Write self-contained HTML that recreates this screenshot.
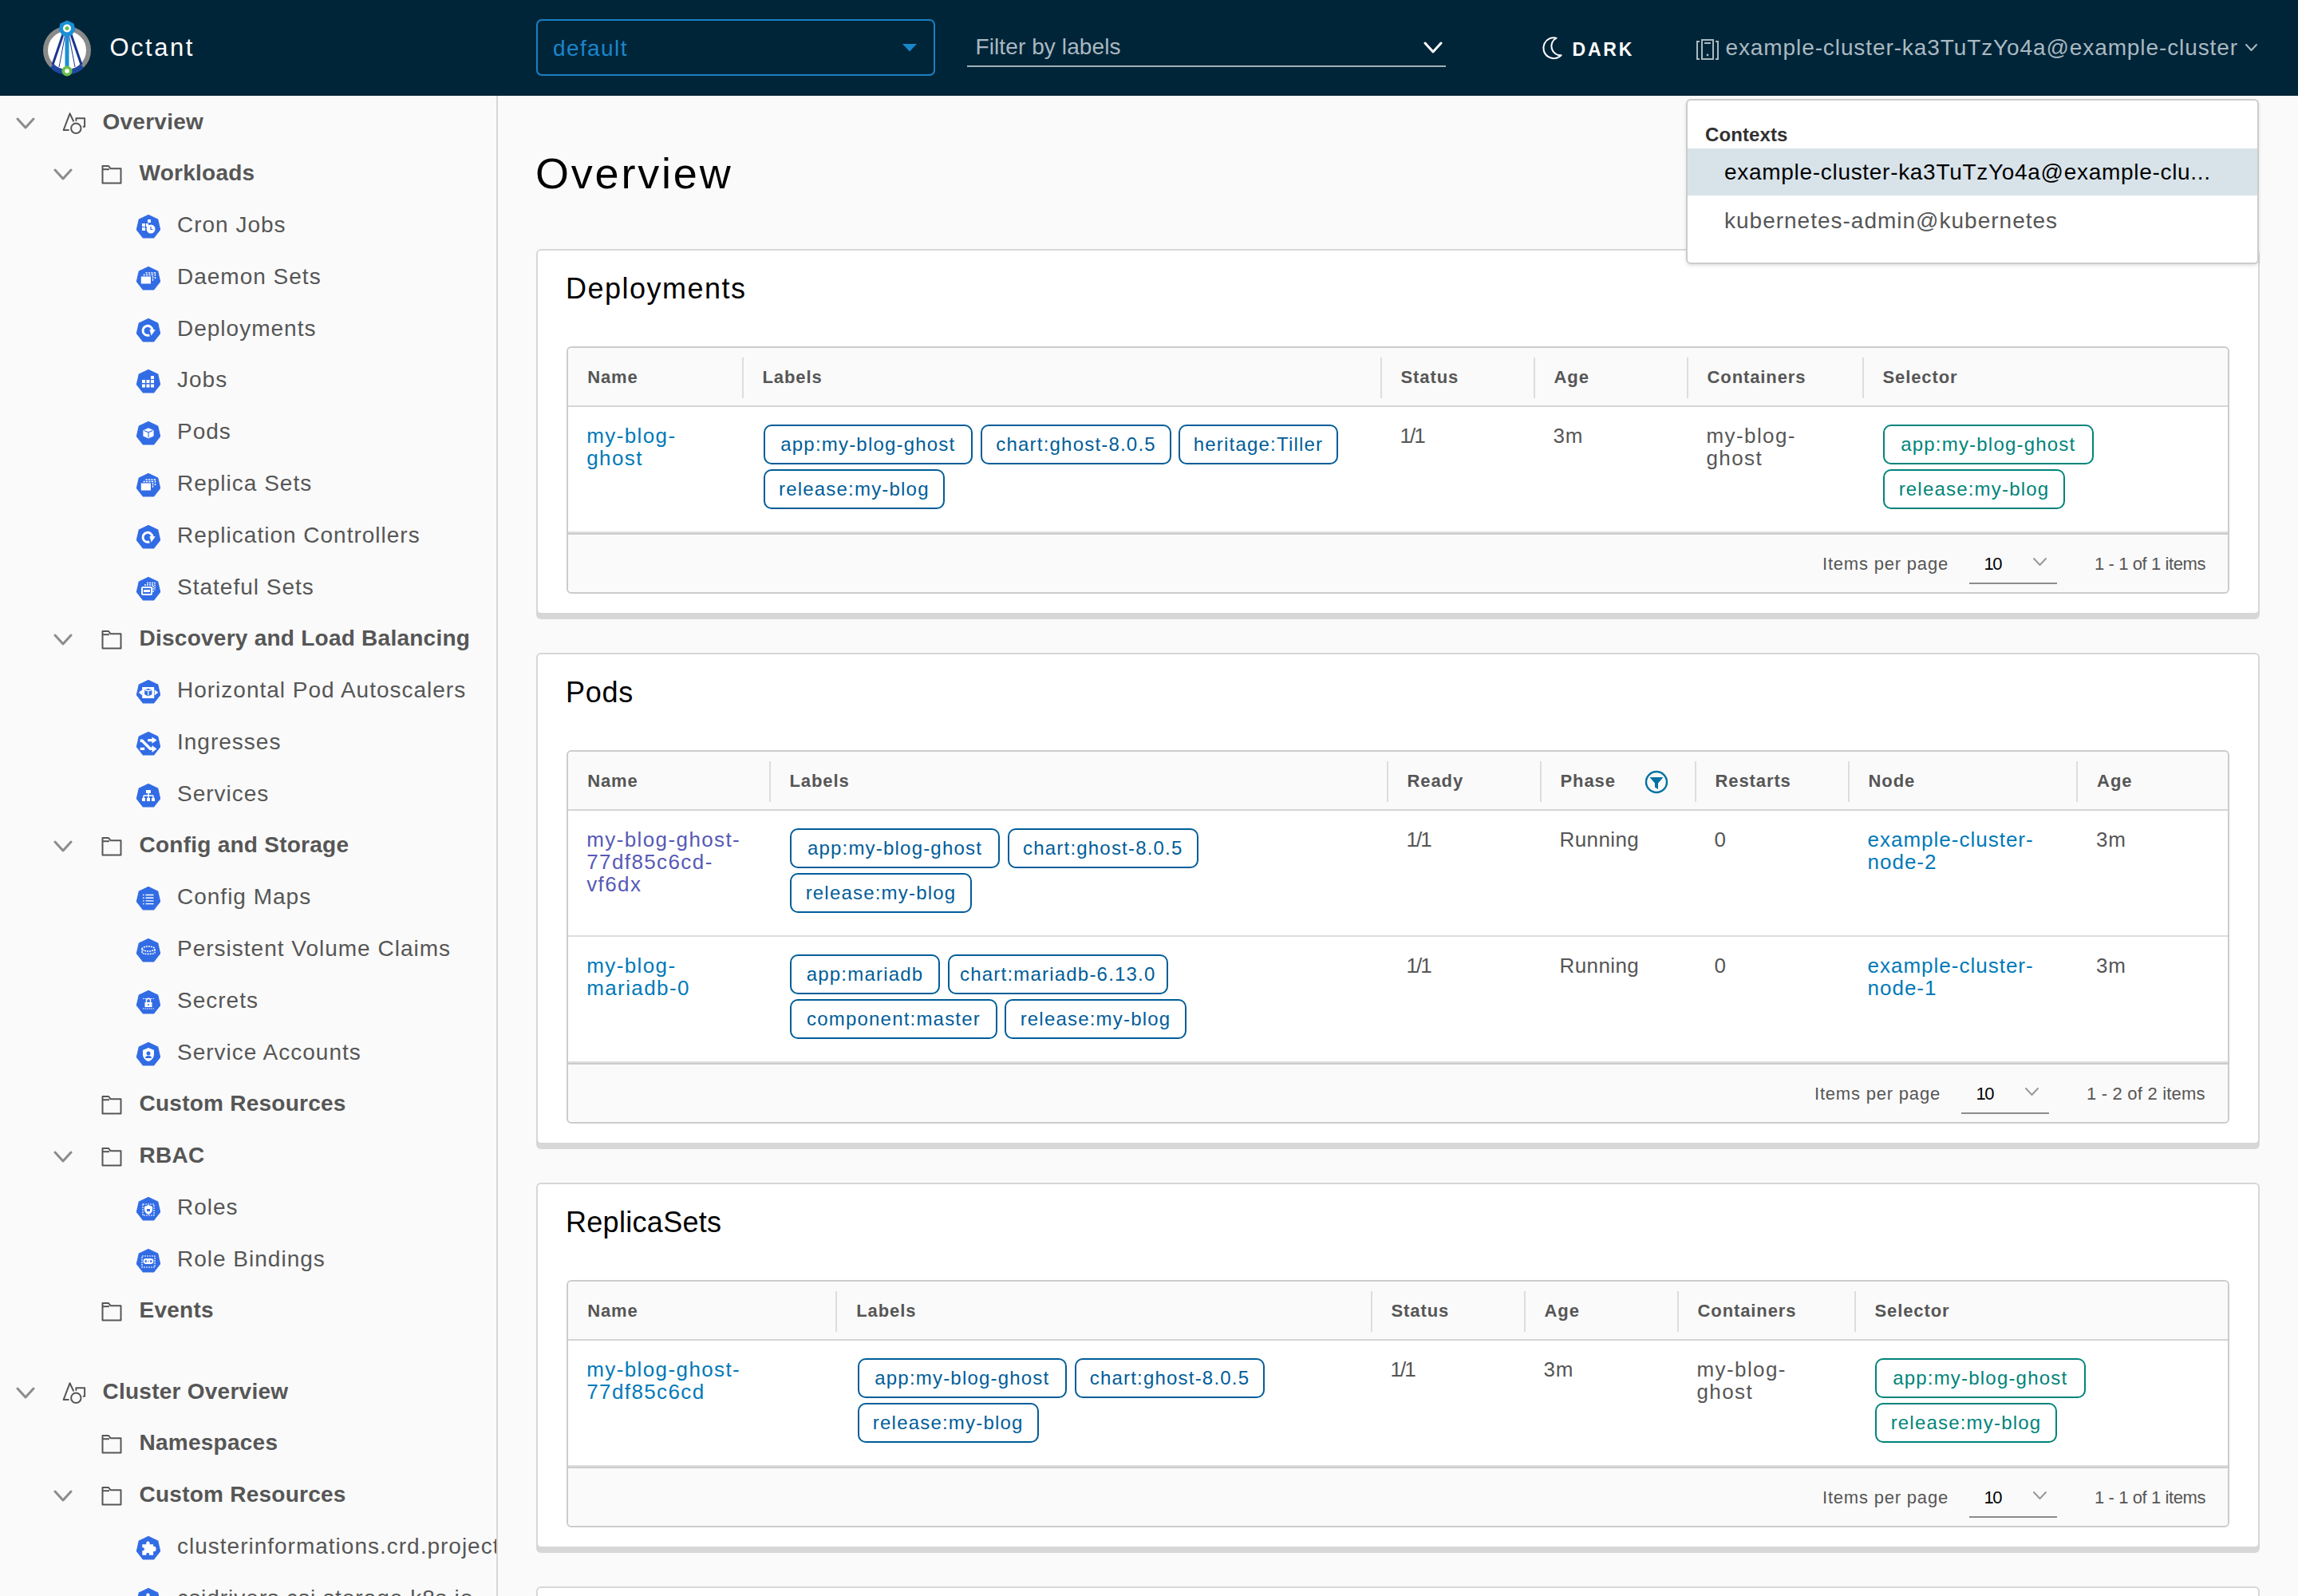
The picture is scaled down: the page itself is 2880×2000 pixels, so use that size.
<!DOCTYPE html>
<html><head><meta charset="utf-8"><title>Octant</title>
<style>
html,body{margin:0;padding:0;width:2880px;height:2000px;overflow:hidden;background:#fafafa;font-family:"Liberation Sans", sans-serif}
@media (max-width:2000px){html{zoom:0.5}}
.t{position:absolute;white-space:nowrap}
.i{position:absolute;display:block}
.card{position:absolute;left:672px;width:2156px;background:#fff;border:2px solid #d7d7d7;border-radius:6px;box-shadow:0 6px 0 0 #d7d7d7}
.tbl{position:absolute;left:710px;width:2080px;background:#fff;border:2px solid #cccccc;border-radius:6px}
.chip{position:absolute;height:46px;border:2px solid;border-radius:10px;box-sizing:content-box;font-size:24px;line-height:46px;text-align:center;letter-spacing:1.2px;white-space:nowrap;background:#fff}
</style></head><body>
<div style="position:absolute;left:0;top:0;width:2880px;height:120px;background:#002538"></div>
<svg class="i" style="left:50px;top:24px" width="70" height="74" viewBox="0 0 70 74">
 <circle cx="34" cy="39" r="27" fill="#fff" stroke="#8a8a8a" stroke-width="6"/>
 <path d="M15 58.5 A27 27 0 0 0 53 58.5" fill="none" stroke="#1e47a0" stroke-width="6"/>
 <path d="M30 16 L16 57 M38 16 L52 57" stroke="#1a3690" stroke-width="3"/>
 <path d="M32 18 L24 60 M36 18 L44 60" stroke="#1a3690" stroke-width="1"/>
 <path d="M34 14 V62" stroke="#1b8fd6" stroke-width="5"/>
 <polygon points="34,1.5 42.5,5.5 44.5,14 39,21 29,21 23.5,14 25.5,5.5" fill="#1b8fd6"/>
 <circle cx="34" cy="11.5" r="5" fill="#fff"/><circle cx="34" cy="11.5" r="2.5" fill="#6cc04a"/>
 <circle cx="34" cy="65" r="6.5" fill="#6cc04a"/><circle cx="34" cy="65" r="2.8" fill="#fff"/>
</svg>
<div class="t" style="left:137.5px;top:40.1px;font-size:31px;line-height:40px;color:#ffffff;letter-spacing:2.5px;">Octant</div>
<div style="position:absolute;left:672px;top:24px;width:496px;height:67px;border:2px solid #1a80c4;border-radius:7px"></div>
<div class="t" style="left:693.0px;top:42.5px;font-size:28px;line-height:36px;color:#1a86ca;letter-spacing:1.4px;">default</div>
<svg class="i" style="left:1130px;top:54px" width="20" height="11" viewBox="0 0 20 11"><path d="M1 1H19L10 10.5z" fill="#1a86ca"/></svg>
<div class="t" style="left:1222.5px;top:41.0px;font-size:28px;line-height:36px;color:#a9b9c2;letter-spacing:0.1px;">Filter by labels</div>
<div style="position:absolute;left:1212px;top:82px;width:600px;height:2px;background:#9fb1bb"></div>
<svg class="i" style="left:1784.0px;top:52.0px" width="24" height="15" viewBox="0 0 24 15"><path d="M2 2 L12.0 13 L22 2" stroke="#ffffff" stroke-width="3" fill="none" stroke-linecap="round" stroke-linejoin="round"/></svg>
<svg class="i" style="left:1931px;top:45px" width="28" height="30" viewBox="0 0 28 30">
 <path d="M19.6 2.6 A13 13 0 1 0 25.6 24.3 A11.5 11.5 0 0 1 19.6 2.6z" fill="none" stroke="#fff" stroke-width="2" stroke-linejoin="round"/></svg>
<div class="t" style="left:1970.5px;top:46.8px;font-size:23px;line-height:30px;color:#ffffff;letter-spacing:2.8px;font-weight:bold;">DARK</div>
<svg class="i" style="left:2125px;top:48px" width="30" height="28" viewBox="0 0 30 28">
 <path d="M5 4H2V26H5M25 4H28V26H25" fill="none" stroke="#a9b9c2" stroke-width="2"/>
 <rect x="8" y="2" width="14" height="24" fill="none" stroke="#a9b9c2" stroke-width="2"/>
 <path d="M11 6H19" stroke="#a9b9c2" stroke-width="2"/><circle cx="15" cy="21" r="1.4" fill="#a9b9c2"/></svg>
<div class="t" style="left:2162.5px;top:42.4px;font-size:28px;line-height:36px;color:#a9b9c2;letter-spacing:0.9px;">example-cluster-ka3TuTzYo4a@example-cluster</div>
<svg class="i" style="left:2813.2px;top:54.4px" width="17" height="11" viewBox="0 0 17 11"><path d="M2 2 L8.5 9 L15 2" stroke="#a9b9c2" stroke-width="2" fill="none" stroke-linecap="round" stroke-linejoin="round"/></svg>
<div style="position:absolute;left:622px;top:120px;width:2px;height:1880px;background:#d7d7d7"></div>
<div style="position:absolute;left:0;top:120px;width:622px;height:1880px;overflow:hidden">
<svg class="i" style="left:20.0px;top:26.5px" width="24" height="15" viewBox="0 0 24 15"><path d="M2 2 L12.0 13 L22 2" stroke="#8c8c8c" stroke-width="3" fill="none" stroke-linecap="round" stroke-linejoin="round"/></svg>
<svg class="i" style="left:78px;top:19.5px" width="30" height="30" viewBox="0 0 30 30"><path d="M7.8 23.1 H1.6 L9.5 2.3 L14 11.8" fill="none" stroke="#565656" stroke-width="2" stroke-linejoin="round" stroke-linecap="round"/><path d="M17.4 11 V8.3 H28.1 V18.8 H26.6" fill="none" stroke="#565656" stroke-width="2" stroke-linejoin="round" stroke-linecap="round"/><circle cx="17.3" cy="20.8" r="6.2" fill="none" stroke="#565656" stroke-width="2"/></svg>
<div class="t" style="left:128.5px;top:14.5px;font-size:28px;line-height:36px;color:#565656;letter-spacing:0.25px;font-weight:bold;">Overview</div>
<svg class="i" style="left:67.0px;top:91.3px" width="24" height="15" viewBox="0 0 24 15"><path d="M2 2 L12.0 13 L22 2" stroke="#8c8c8c" stroke-width="3" fill="none" stroke-linecap="round" stroke-linejoin="round"/></svg>
<svg class="i" style="left:127px;top:86.3px" width="26" height="25" viewBox="0 0 26 25"><path d="M1.5 23.5V2h7.5l2.5 3.2H24.5V23.5z" fill="none" stroke="#565656" stroke-width="2" stroke-linejoin="round"/><path d="M1.5 6.2h8.5" stroke="#565656" stroke-width="2"/></svg>
<div class="t" style="left:174.5px;top:79.3px;font-size:28px;line-height:36px;color:#565656;letter-spacing:0.25px;font-weight:bold;">Workloads</div>
<svg class="i" style="left:171px;top:149.1px" width="30" height="31" viewBox="0 0 30 31"><polygon points="15.00,0.50 26.73,6.15 29.62,18.84 21.51,29.01 8.49,29.01 0.38,18.84 3.27,6.15" fill="#326ce5" stroke="#326ce5" stroke-width="1.2" stroke-linejoin="round"/><rect x="7" y="11" width="4" height="4" fill="#fff"/><rect x="7" y="16" width="4" height="4" fill="#fff"/><rect x="12" y="11" width="3" height="4" fill="#fff"/><rect x="14" y="6" width="4" height="4" fill="#fff"/><circle cx="18" cy="18" r="5.5" fill="#fff"/><path d="M18 15v3.5h2.5" stroke="#326ce5" stroke-width="1.2" fill="none"/></svg>
<div class="t" style="left:222.0px;top:144.1px;font-size:28px;line-height:36px;color:#565656;letter-spacing:1.0px;">Cron Jobs</div>
<svg class="i" style="left:171px;top:213.8px" width="30" height="31" viewBox="0 0 30 31"><polygon points="15.00,0.50 26.73,6.15 29.62,18.84 21.51,29.01 8.49,29.01 0.38,18.84 3.27,6.15" fill="#326ce5" stroke="#326ce5" stroke-width="1.2" stroke-linejoin="round"/><rect x="5.8" y="12.5" width="12.2" height="9" fill="#fff"/><path d="M8.6 10.5H20.5V18.5" stroke="#fff" stroke-width="1.4" fill="none" stroke-dasharray="2.2 1.2"/><path d="M11.5 8H23.5V15.5" stroke="#fff" stroke-width="1.4" fill="none" stroke-dasharray="2.2 1.2"/></svg>
<div class="t" style="left:222.0px;top:208.8px;font-size:28px;line-height:36px;color:#565656;letter-spacing:1.0px;">Daemon Sets</div>
<svg class="i" style="left:171px;top:278.6px" width="30" height="31" viewBox="0 0 30 31"><polygon points="15.00,0.50 26.73,6.15 29.62,18.84 21.51,29.01 8.49,29.01 0.38,18.84 3.27,6.15" fill="#326ce5" stroke="#326ce5" stroke-width="1.2" stroke-linejoin="round"/><path d="M16.3 20.9A6 6 0 1 1 20 14.6" stroke="#fff" stroke-width="3" fill="none"/><path d="M16.4 13.9L23.8 14.3L18.6 21.4z" fill="#fff"/></svg>
<div class="t" style="left:222.0px;top:273.6px;font-size:28px;line-height:36px;color:#565656;letter-spacing:1.0px;">Deployments</div>
<svg class="i" style="left:171px;top:343.4px" width="30" height="31" viewBox="0 0 30 31"><polygon points="15.00,0.50 26.73,6.15 29.62,18.84 21.51,29.01 8.49,29.01 0.38,18.84 3.27,6.15" fill="#326ce5" stroke="#326ce5" stroke-width="1.2" stroke-linejoin="round"/><rect x="7" y="13" width="4" height="4" fill="#fff"/><rect x="12.5" y="13" width="4" height="4" fill="#fff"/><rect x="18" y="13" width="4" height="4" fill="#fff"/><rect x="7" y="18.5" width="4" height="4" fill="#fff"/><rect x="12.5" y="18.5" width="4" height="4" fill="#fff"/><rect x="18" y="18.5" width="4" height="4" fill="#fff"/><rect x="18" y="8" width="4" height="4" fill="#fff"/></svg>
<div class="t" style="left:222.0px;top:338.4px;font-size:28px;line-height:36px;color:#565656;letter-spacing:1.0px;">Jobs</div>
<svg class="i" style="left:171px;top:408.2px" width="30" height="31" viewBox="0 0 30 31"><polygon points="15.00,0.50 26.73,6.15 29.62,18.84 21.51,29.01 8.49,29.01 0.38,18.84 3.27,6.15" fill="#326ce5" stroke="#326ce5" stroke-width="1.2" stroke-linejoin="round"/><path d="M15 8.2l6.6 3v7.4L15 21.4l-6.6-2.8v-7.4z" fill="#fff"/><path d="M9.6 11.6L15 13.8L20.4 11.6M15 13.8V20.6" stroke="#326ce5" stroke-width="1.1" fill="none"/></svg>
<div class="t" style="left:222.0px;top:403.2px;font-size:28px;line-height:36px;color:#565656;letter-spacing:1.0px;">Pods</div>
<svg class="i" style="left:171px;top:473.0px" width="30" height="31" viewBox="0 0 30 31"><polygon points="15.00,0.50 26.73,6.15 29.62,18.84 21.51,29.01 8.49,29.01 0.38,18.84 3.27,6.15" fill="#326ce5" stroke="#326ce5" stroke-width="1.2" stroke-linejoin="round"/><rect x="5.8" y="12.5" width="12.2" height="9" fill="#fff"/><path d="M8.6 10.5H20.5V18.5" stroke="#fff" stroke-width="1.4" fill="none" stroke-dasharray="2.2 1.2"/><path d="M11.5 8H23.5V15.5" stroke="#fff" stroke-width="1.4" fill="none" stroke-dasharray="2.2 1.2"/></svg>
<div class="t" style="left:222.0px;top:468.0px;font-size:28px;line-height:36px;color:#565656;letter-spacing:1.0px;">Replica Sets</div>
<svg class="i" style="left:171px;top:537.7px" width="30" height="31" viewBox="0 0 30 31"><polygon points="15.00,0.50 26.73,6.15 29.62,18.84 21.51,29.01 8.49,29.01 0.38,18.84 3.27,6.15" fill="#326ce5" stroke="#326ce5" stroke-width="1.2" stroke-linejoin="round"/><path d="M16.3 20.9A6 6 0 1 1 20 14.6" stroke="#fff" stroke-width="3" fill="none"/><path d="M16.4 13.9L23.8 14.3L18.6 21.4z" fill="#fff"/></svg>
<div class="t" style="left:222.0px;top:532.7px;font-size:28px;line-height:36px;color:#565656;letter-spacing:1.0px;">Replication Controllers</div>
<svg class="i" style="left:171px;top:602.5px" width="30" height="31" viewBox="0 0 30 31"><polygon points="15.00,0.50 26.73,6.15 29.62,18.84 21.51,29.01 8.49,29.01 0.38,18.84 3.27,6.15" fill="#326ce5" stroke="#326ce5" stroke-width="1.2" stroke-linejoin="round"/><rect x="7" y="13" width="12" height="9" rx="1" fill="none" stroke="#fff" stroke-width="2"/><rect x="9" y="16" width="8" height="3" fill="#fff"/><path d="M10 10h11v9M13 7.5h10v9" stroke="#fff" stroke-width="1.3" fill="none" stroke-dasharray="2 1"/></svg>
<div class="t" style="left:222.0px;top:597.5px;font-size:28px;line-height:36px;color:#565656;letter-spacing:1.0px;">Stateful Sets</div>
<svg class="i" style="left:67.0px;top:674.3px" width="24" height="15" viewBox="0 0 24 15"><path d="M2 2 L12.0 13 L22 2" stroke="#8c8c8c" stroke-width="3" fill="none" stroke-linecap="round" stroke-linejoin="round"/></svg>
<svg class="i" style="left:127px;top:669.3px" width="26" height="25" viewBox="0 0 26 25"><path d="M1.5 23.5V2h7.5l2.5 3.2H24.5V23.5z" fill="none" stroke="#565656" stroke-width="2" stroke-linejoin="round"/><path d="M1.5 6.2h8.5" stroke="#565656" stroke-width="2"/></svg>
<div class="t" style="left:174.5px;top:662.3px;font-size:28px;line-height:36px;color:#565656;letter-spacing:0.25px;font-weight:bold;">Discovery and Load Balancing</div>
<svg class="i" style="left:171px;top:732.1px" width="30" height="31" viewBox="0 0 30 31"><polygon points="15.00,0.50 26.73,6.15 29.62,18.84 21.51,29.01 8.49,29.01 0.38,18.84 3.27,6.15" fill="#326ce5" stroke="#326ce5" stroke-width="1.2" stroke-linejoin="round"/><rect x="7.2" y="9" width="15" height="14" fill="#fff"/><path d="M14.8 10.8l4.6 2.3v5.2l-4.6 2.3-4.6-2.3v-5.2z" fill="#326ce5"/><path d="M11.2 13.4h7.2M14.8 13.4v6.2" stroke="#fff" stroke-width="1.3" fill="none"/><path d="M2.8 15.8l4.6-3.6v7.2zM27.3 15.8l-4.6-3.6v7.2z" fill="#fff"/></svg>
<div class="t" style="left:222.0px;top:727.1px;font-size:28px;line-height:36px;color:#565656;letter-spacing:1.0px;">Horizontal Pod Autoscalers</div>
<svg class="i" style="left:171px;top:796.9px" width="30" height="31" viewBox="0 0 30 31"><polygon points="15.00,0.50 26.73,6.15 29.62,18.84 21.51,29.01 8.49,29.01 0.38,18.84 3.27,6.15" fill="#326ce5" stroke="#326ce5" stroke-width="1.2" stroke-linejoin="round"/><path d="M4.7 11.3h2.5l10 10h2.8" stroke="#fff" stroke-width="3.4" fill="none"/><path d="M4.7 21.4h5.5M14.2 10.6h5.8" stroke="#fff" stroke-width="3.4"/><path d="M19.5 6.6L25.5 10.6L19.5 14.7zM19.5 16.9L25.5 21.4L19.5 25.9z" fill="#fff"/></svg>
<div class="t" style="left:222.0px;top:791.9px;font-size:28px;line-height:36px;color:#565656;letter-spacing:1.0px;">Ingresses</div>
<svg class="i" style="left:171px;top:861.6px" width="30" height="31" viewBox="0 0 30 31"><polygon points="15.00,0.50 26.73,6.15 29.62,18.84 21.51,29.01 8.49,29.01 0.38,18.84 3.27,6.15" fill="#326ce5" stroke="#326ce5" stroke-width="1.2" stroke-linejoin="round"/><rect x="12" y="8" width="6" height="4" fill="#fff"/><path d="M15 12v3M9 15h12M9 15v3M15 15v3M21 15v3" stroke="#fff" stroke-width="1.5" fill="none"/><rect x="7" y="18" width="4" height="4" fill="#fff"/><rect x="13" y="18" width="4" height="4" fill="#fff"/><rect x="19" y="18" width="4" height="4" fill="#fff"/></svg>
<div class="t" style="left:222.0px;top:856.6px;font-size:28px;line-height:36px;color:#565656;letter-spacing:1.0px;">Services</div>
<svg class="i" style="left:67.0px;top:933.4px" width="24" height="15" viewBox="0 0 24 15"><path d="M2 2 L12.0 13 L22 2" stroke="#8c8c8c" stroke-width="3" fill="none" stroke-linecap="round" stroke-linejoin="round"/></svg>
<svg class="i" style="left:127px;top:928.4px" width="26" height="25" viewBox="0 0 26 25"><path d="M1.5 23.5V2h7.5l2.5 3.2H24.5V23.5z" fill="none" stroke="#565656" stroke-width="2" stroke-linejoin="round"/><path d="M1.5 6.2h8.5" stroke="#565656" stroke-width="2"/></svg>
<div class="t" style="left:174.5px;top:921.4px;font-size:28px;line-height:36px;color:#565656;letter-spacing:0.25px;font-weight:bold;">Config and Storage</div>
<svg class="i" style="left:171px;top:991.2px" width="30" height="31" viewBox="0 0 30 31"><polygon points="15.00,0.50 26.73,6.15 29.62,18.84 21.51,29.01 8.49,29.01 0.38,18.84 3.27,6.15" fill="#326ce5" stroke="#326ce5" stroke-width="1.2" stroke-linejoin="round"/><path d="M11.5 10.5h10M11.5 14.2h10M11.5 17.9h10M11.5 21.6h10" stroke="#fff" stroke-width="1.4"/><path d="M8 10.5h1.6M8 14.2h1.6M8 17.9h1.6M8 21.6h1.6" stroke="#fff" stroke-width="1.4"/></svg>
<div class="t" style="left:222.0px;top:986.2px;font-size:28px;line-height:36px;color:#565656;letter-spacing:1.0px;">Config Maps</div>
<svg class="i" style="left:171px;top:1056.0px" width="30" height="31" viewBox="0 0 30 31"><polygon points="15.00,0.50 26.73,6.15 29.62,18.84 21.51,29.01 8.49,29.01 0.38,18.84 3.27,6.15" fill="#326ce5" stroke="#326ce5" stroke-width="1.2" stroke-linejoin="round"/><ellipse cx="15" cy="13" rx="8" ry="3" fill="none" stroke="#fff" stroke-width="1.5" stroke-dasharray="2 1"/><path d="M7 13v5c0 2 16 2 16 0v-5" fill="none" stroke="#fff" stroke-width="1.5" stroke-dasharray="2 1"/></svg>
<div class="t" style="left:222.0px;top:1051.0px;font-size:28px;line-height:36px;color:#565656;letter-spacing:1.0px;">Persistent Volume Claims</div>
<svg class="i" style="left:171px;top:1120.8px" width="30" height="31" viewBox="0 0 30 31"><polygon points="15.00,0.50 26.73,6.15 29.62,18.84 21.51,29.01 8.49,29.01 0.38,18.84 3.27,6.15" fill="#326ce5" stroke="#326ce5" stroke-width="1.2" stroke-linejoin="round"/><rect x="10.5" y="15" width="9" height="6" fill="#fff"/><path d="M12.5 15v-2.2a2.5 2.5 0 0 1 5 0V15" stroke="#fff" stroke-width="1.5" fill="none"/><circle cx="15" cy="18" r="1" fill="#326ce5"/><path d="M8 10.5h14M8 23h14" stroke="#fff" stroke-width="1.1" stroke-dasharray="1.6 1"/></svg>
<div class="t" style="left:222.0px;top:1115.8px;font-size:28px;line-height:36px;color:#565656;letter-spacing:1.0px;">Secrets</div>
<svg class="i" style="left:171px;top:1185.5px" width="30" height="31" viewBox="0 0 30 31"><polygon points="15.00,0.50 26.73,6.15 29.62,18.84 21.51,29.01 8.49,29.01 0.38,18.84 3.27,6.15" fill="#326ce5" stroke="#326ce5" stroke-width="1.2" stroke-linejoin="round"/><path d="M15 7l7 3v5c0 5-3.5 8-7 9-3.5-1-7-4-7-9v-5z" fill="#fff"/><circle cx="15" cy="14" r="2.5" fill="#326ce5"/><path d="M11 20a4 3 0 0 1 8 0" fill="#326ce5"/></svg>
<div class="t" style="left:222.0px;top:1180.5px;font-size:28px;line-height:36px;color:#565656;letter-spacing:1.0px;">Service Accounts</div>
<svg class="i" style="left:127px;top:1252.3px" width="26" height="25" viewBox="0 0 26 25"><path d="M1.5 23.5V2h7.5l2.5 3.2H24.5V23.5z" fill="none" stroke="#565656" stroke-width="2" stroke-linejoin="round"/><path d="M1.5 6.2h8.5" stroke="#565656" stroke-width="2"/></svg>
<div class="t" style="left:174.5px;top:1245.3px;font-size:28px;line-height:36px;color:#565656;letter-spacing:0.25px;font-weight:bold;">Custom Resources</div>
<svg class="i" style="left:67.0px;top:1322.1px" width="24" height="15" viewBox="0 0 24 15"><path d="M2 2 L12.0 13 L22 2" stroke="#8c8c8c" stroke-width="3" fill="none" stroke-linecap="round" stroke-linejoin="round"/></svg>
<svg class="i" style="left:127px;top:1317.1px" width="26" height="25" viewBox="0 0 26 25"><path d="M1.5 23.5V2h7.5l2.5 3.2H24.5V23.5z" fill="none" stroke="#565656" stroke-width="2" stroke-linejoin="round"/><path d="M1.5 6.2h8.5" stroke="#565656" stroke-width="2"/></svg>
<div class="t" style="left:174.5px;top:1310.1px;font-size:28px;line-height:36px;color:#565656;letter-spacing:0.25px;font-weight:bold;">RBAC</div>
<svg class="i" style="left:171px;top:1379.9px" width="30" height="31" viewBox="0 0 30 31"><polygon points="15.00,0.50 26.73,6.15 29.62,18.84 21.51,29.01 8.49,29.01 0.38,18.84 3.27,6.15" fill="#326ce5" stroke="#326ce5" stroke-width="1.2" stroke-linejoin="round"/><rect x="8" y="9" width="14" height="14" fill="none" stroke="#fff" stroke-width="1.2" stroke-dasharray="2 1"/><path d="M15 10l5 2v4c0 3-2.5 5-5 6-2.5-1-5-3-5-6v-4z" fill="#fff"/><rect x="13" y="15" width="4" height="3" fill="#326ce5"/></svg>
<div class="t" style="left:222.0px;top:1374.9px;font-size:28px;line-height:36px;color:#565656;letter-spacing:1.0px;">Roles</div>
<svg class="i" style="left:171px;top:1444.7px" width="30" height="31" viewBox="0 0 30 31"><polygon points="15.00,0.50 26.73,6.15 29.62,18.84 21.51,29.01 8.49,29.01 0.38,18.84 3.27,6.15" fill="#326ce5" stroke="#326ce5" stroke-width="1.2" stroke-linejoin="round"/><rect x="7" y="9" width="16" height="14" fill="none" stroke="#fff" stroke-width="1.2" stroke-dasharray="2 1"/><rect x="9.5" y="13" width="7" height="5" rx="2.5" fill="none" stroke="#fff" stroke-width="1.8"/><rect x="13.5" y="13" width="7" height="5" rx="2.5" fill="none" stroke="#fff" stroke-width="1.8"/></svg>
<div class="t" style="left:222.0px;top:1439.7px;font-size:28px;line-height:36px;color:#565656;letter-spacing:1.0px;">Role Bindings</div>
<svg class="i" style="left:127px;top:1511.4px" width="26" height="25" viewBox="0 0 26 25"><path d="M1.5 23.5V2h7.5l2.5 3.2H24.5V23.5z" fill="none" stroke="#565656" stroke-width="2" stroke-linejoin="round"/><path d="M1.5 6.2h8.5" stroke="#565656" stroke-width="2"/></svg>
<div class="t" style="left:174.5px;top:1504.4px;font-size:28px;line-height:36px;color:#565656;letter-spacing:0.25px;font-weight:bold;">Events</div>
<svg class="i" style="left:20.0px;top:1617.5px" width="24" height="15" viewBox="0 0 24 15"><path d="M2 2 L12.0 13 L22 2" stroke="#8c8c8c" stroke-width="3" fill="none" stroke-linecap="round" stroke-linejoin="round"/></svg>
<svg class="i" style="left:78px;top:1610.5px" width="30" height="30" viewBox="0 0 30 30"><path d="M7.8 23.1 H1.6 L9.5 2.3 L14 11.8" fill="none" stroke="#565656" stroke-width="2" stroke-linejoin="round" stroke-linecap="round"/><path d="M17.4 11 V8.3 H28.1 V18.8 H26.6" fill="none" stroke="#565656" stroke-width="2" stroke-linejoin="round" stroke-linecap="round"/><circle cx="17.3" cy="20.8" r="6.2" fill="none" stroke="#565656" stroke-width="2"/></svg>
<div class="t" style="left:128.5px;top:1605.5px;font-size:28px;line-height:36px;color:#565656;letter-spacing:0.25px;font-weight:bold;">Cluster Overview</div>
<svg class="i" style="left:127px;top:1677.3px" width="26" height="25" viewBox="0 0 26 25"><path d="M1.5 23.5V2h7.5l2.5 3.2H24.5V23.5z" fill="none" stroke="#565656" stroke-width="2" stroke-linejoin="round"/><path d="M1.5 6.2h8.5" stroke="#565656" stroke-width="2"/></svg>
<div class="t" style="left:174.5px;top:1670.3px;font-size:28px;line-height:36px;color:#565656;letter-spacing:0.25px;font-weight:bold;">Namespaces</div>
<svg class="i" style="left:67.0px;top:1747.1px" width="24" height="15" viewBox="0 0 24 15"><path d="M2 2 L12.0 13 L22 2" stroke="#8c8c8c" stroke-width="3" fill="none" stroke-linecap="round" stroke-linejoin="round"/></svg>
<svg class="i" style="left:127px;top:1742.1px" width="26" height="25" viewBox="0 0 26 25"><path d="M1.5 23.5V2h7.5l2.5 3.2H24.5V23.5z" fill="none" stroke="#565656" stroke-width="2" stroke-linejoin="round"/><path d="M1.5 6.2h8.5" stroke="#565656" stroke-width="2"/></svg>
<div class="t" style="left:174.5px;top:1735.1px;font-size:28px;line-height:36px;color:#565656;letter-spacing:0.25px;font-weight:bold;">Custom Resources</div>
<svg class="i" style="left:171px;top:1804.8px" width="30" height="31" viewBox="0 0 30 31"><polygon points="15.00,0.50 26.73,6.15 29.62,18.84 21.51,29.01 8.49,29.01 0.38,18.84 3.27,6.15" fill="#326ce5" stroke="#326ce5" stroke-width="1.2" stroke-linejoin="round"/><path d="M7.3 10.2H12.3V8.6A2.15 2.15 0 0 1 16.6 8.6V10.2H21.1V12.7H22A2.6 3.25 0 0 1 22 19.2H21.1V23.8H16V22.7A1.85 1.85 0 0 0 12.3 22.7V23.8H7.3V18.2H8A2 2 0 0 0 8 14.2H7.3Z" fill="#fff"/></svg>
<div class="t" style="left:222.0px;top:1799.8px;font-size:28px;line-height:36px;color:#565656;letter-spacing:1.0px;">clusterinformations.crd.projectcalico.org</div>
<svg class="i" style="left:171px;top:1869.6px" width="30" height="31" viewBox="0 0 30 31"><polygon points="15.00,0.50 26.73,6.15 29.62,18.84 21.51,29.01 8.49,29.01 0.38,18.84 3.27,6.15" fill="#326ce5" stroke="#326ce5" stroke-width="1.2" stroke-linejoin="round"/><path d="M7.3 10.2H12.3V8.6A2.15 2.15 0 0 1 16.6 8.6V10.2H21.1V12.7H22A2.6 3.25 0 0 1 22 19.2H21.1V23.8H16V22.7A1.85 1.85 0 0 0 12.3 22.7V23.8H7.3V18.2H8A2 2 0 0 0 8 14.2H7.3Z" fill="#fff"/></svg>
<div class="t" style="left:222.0px;top:1864.6px;font-size:28px;line-height:36px;color:#565656;letter-spacing:1.0px;">csidrivers.csi.storage.k8s.io</div>
</div>
<div class="t" style="left:671.0px;top:182.0px;font-size:54px;line-height:70px;color:#000000;letter-spacing:2.8px;">Overview</div>
<div class="card" style="top:312px;height:454px"></div>
<div class="t" style="left:709.0px;top:338.1px;font-size:36px;line-height:47px;color:#000000;letter-spacing:1.5px;">Deployments</div>
<div class="tbl" style="top:434px;height:306px"></div>
<div style="position:absolute;left:712px;top:436px;width:2080px;height:72px;background:#fafafa;border-radius:5px 5px 0 0"></div>
<div style="position:absolute;left:712px;top:508px;width:2080px;height:2px;background:#d5d5d5"></div>
<div class="t" style="left:736.2px;top:458.4px;font-size:22px;line-height:29px;color:#565656;letter-spacing:0.9px;font-weight:bold;">Name</div>
<div class="t" style="left:955.5px;top:458.4px;font-size:22px;line-height:29px;color:#565656;letter-spacing:0.9px;font-weight:bold;">Labels</div>
<div class="t" style="left:1755.5px;top:458.4px;font-size:22px;line-height:29px;color:#565656;letter-spacing:0.9px;font-weight:bold;">Status</div>
<div class="t" style="left:1947.5px;top:458.4px;font-size:22px;line-height:29px;color:#565656;letter-spacing:0.9px;font-weight:bold;">Age</div>
<div class="t" style="left:2139.5px;top:458.4px;font-size:22px;line-height:29px;color:#565656;letter-spacing:0.9px;font-weight:bold;">Containers</div>
<div class="t" style="left:2359.5px;top:458.4px;font-size:22px;line-height:29px;color:#565656;letter-spacing:0.9px;font-weight:bold;">Selector</div>
<div style="position:absolute;left:930px;top:448px;width:2px;height:51px;background:#dddddd"></div>
<div style="position:absolute;left:1729.6px;top:448px;width:2px;height:51px;background:#dddddd"></div>
<div style="position:absolute;left:1922px;top:448px;width:2px;height:51px;background:#dddddd"></div>
<div style="position:absolute;left:2114px;top:448px;width:2px;height:51px;background:#dddddd"></div>
<div style="position:absolute;left:2334px;top:448px;width:2px;height:51px;background:#dddddd"></div>
<div class="t" style="left:735.2px;top:529.3px;font-size:26px;line-height:34px;color:#0079b8;letter-spacing:1.4px;">my-blog-</div>
<div class="t" style="left:735.2px;top:557.3px;font-size:26px;line-height:34px;color:#0079b8;letter-spacing:1.4px;">ghost</div>
<div class="chip" style="left:956.7px;top:532.0px;width:258.3px;border-color:#005d99;color:#005d99">app:my-blog-ghost</div>
<div class="chip" style="left:1228.7px;top:532.0px;width:235.8px;border-color:#005d99;color:#005d99">chart:ghost-8.0.5</div>
<div class="chip" style="left:1477.0px;top:532.0px;width:196.0px;border-color:#005d99;color:#005d99">heritage:Tiller</div>
<div class="chip" style="left:956.7px;top:588.0px;width:223.3px;border-color:#005d99;color:#005d99">release:my-blog</div>
<div class="t" style="left:1754.5px;top:529.3px;font-size:26px;line-height:34px;color:#565656;letter-spacing:-2px;">1/1</div>
<div class="t" style="left:1946.5px;top:529.3px;font-size:26px;line-height:34px;color:#565656;letter-spacing:0.8px;">3m</div>
<div class="t" style="left:2138.5px;top:529.3px;font-size:26px;line-height:34px;color:#565656;letter-spacing:1.4px;">my-blog-</div>
<div class="t" style="left:2138.5px;top:557.3px;font-size:26px;line-height:34px;color:#565656;letter-spacing:1.4px;">ghost</div>
<div class="chip" style="left:2360.0px;top:532.0px;width:259.6px;border-color:#00847a;color:#00847a">app:my-blog-ghost</div>
<div class="chip" style="left:2360.0px;top:588.0px;width:224.0px;border-color:#00847a;color:#00847a">release:my-blog</div>
<div style="position:absolute;left:712px;top:666px;width:2080px;height:2px;background:#dddddd"></div>
<div style="position:absolute;left:712px;top:668px;width:2080px;height:72px;background:#fafafa;border-top:2px solid #cccccc;border-radius:0 0 5px 5px"></div>
<div class="t" style="left:2284.0px;top:692.4px;font-size:22px;line-height:29px;color:#565656;letter-spacing:0.8px;">Items per page</div>
<div class="t" style="left:2486.5px;top:692.4px;font-size:22px;line-height:29px;color:#000000;letter-spacing:-1.5px;">10</div>
<svg class="i" style="left:2546.5px;top:697.5px" width="19" height="12" viewBox="0 0 19 12"><path d="M2 2 L9.5 10 L17 2" stroke="#999999" stroke-width="2" fill="none" stroke-linecap="round" stroke-linejoin="round"/></svg>
<div style="position:absolute;left:2468px;top:729.5px;width:110px;height:2px;background:#8c8c8c"></div>
<div class="t" style="left:2625.0px;top:692.4px;font-size:22px;line-height:29px;color:#565656;letter-spacing:-0.4px;">1 - 1 of 1 items</div>
<div class="card" style="top:818px;height:612px"></div>
<div class="t" style="left:709.0px;top:844.1px;font-size:36px;line-height:47px;color:#000000;letter-spacing:0.7px;">Pods</div>
<div class="tbl" style="top:940px;height:464px"></div>
<div style="position:absolute;left:712px;top:942px;width:2080px;height:72px;background:#fafafa;border-radius:5px 5px 0 0"></div>
<div style="position:absolute;left:712px;top:1014px;width:2080px;height:2px;background:#d5d5d5"></div>
<div class="t" style="left:736.2px;top:964.4px;font-size:22px;line-height:29px;color:#565656;letter-spacing:0.9px;font-weight:bold;">Name</div>
<div class="t" style="left:989.5px;top:964.4px;font-size:22px;line-height:29px;color:#565656;letter-spacing:0.9px;font-weight:bold;">Labels</div>
<div class="t" style="left:1763.5px;top:964.4px;font-size:22px;line-height:29px;color:#565656;letter-spacing:0.9px;font-weight:bold;">Ready</div>
<div class="t" style="left:1955.5px;top:964.4px;font-size:22px;line-height:29px;color:#565656;letter-spacing:0.9px;font-weight:bold;">Phase</div>
<svg class="i" style="left:2061px;top:965px" width="30" height="30" viewBox="0 0 30 30">
 <circle cx="15" cy="15" r="13" fill="none" stroke="#0072a3" stroke-width="2.4"/>
 <path d="M6.5 9 H23.5 L17 16.5 V24 L13 21.5 V16.5z" fill="#0072a3"/></svg>
<div class="t" style="left:2149.5px;top:964.4px;font-size:22px;line-height:29px;color:#565656;letter-spacing:0.9px;font-weight:bold;">Restarts</div>
<div class="t" style="left:2341.5px;top:964.4px;font-size:22px;line-height:29px;color:#565656;letter-spacing:0.9px;font-weight:bold;">Node</div>
<div class="t" style="left:2628.1px;top:964.4px;font-size:22px;line-height:29px;color:#565656;letter-spacing:0.9px;font-weight:bold;">Age</div>
<div style="position:absolute;left:964px;top:954px;width:2px;height:51px;background:#dddddd"></div>
<div style="position:absolute;left:1738px;top:954px;width:2px;height:51px;background:#dddddd"></div>
<div style="position:absolute;left:1930px;top:954px;width:2px;height:51px;background:#dddddd"></div>
<div style="position:absolute;left:2123.5px;top:954px;width:2px;height:51px;background:#dddddd"></div>
<div style="position:absolute;left:2315.7px;top:954px;width:2px;height:51px;background:#dddddd"></div>
<div style="position:absolute;left:2602px;top:954px;width:2px;height:51px;background:#dddddd"></div>
<div class="t" style="left:735.2px;top:1035.3px;font-size:26px;line-height:34px;color:#5659b6;letter-spacing:1.4px;">my-blog-ghost-</div>
<div class="t" style="left:735.2px;top:1063.3px;font-size:26px;line-height:34px;color:#5659b6;letter-spacing:1.4px;">77df85c6cd-</div>
<div class="t" style="left:735.2px;top:1091.3px;font-size:26px;line-height:34px;color:#5659b6;letter-spacing:1.4px;">vf6dx</div>
<div class="chip" style="left:990.0px;top:1038.0px;width:259.0px;border-color:#005d99;color:#005d99">app:my-blog-ghost</div>
<div class="chip" style="left:1263.0px;top:1038.0px;width:234.6px;border-color:#005d99;color:#005d99">chart:ghost-8.0.5</div>
<div class="chip" style="left:990.0px;top:1094.0px;width:224.0px;border-color:#005d99;color:#005d99">release:my-blog</div>
<div class="t" style="left:1762.5px;top:1035.3px;font-size:26px;line-height:34px;color:#565656;letter-spacing:-2px;">1/1</div>
<div class="t" style="left:1954.5px;top:1035.3px;font-size:26px;line-height:34px;color:#565656;letter-spacing:0.4px;">Running</div>
<div class="t" style="left:2148.5px;top:1035.3px;font-size:26px;line-height:34px;color:#565656;letter-spacing:1.2px;">0</div>
<div class="t" style="left:2340.5px;top:1035.3px;font-size:26px;line-height:34px;color:#0079b8;letter-spacing:1.0px;">example-cluster-</div>
<div class="t" style="left:2340.5px;top:1063.3px;font-size:26px;line-height:34px;color:#0079b8;letter-spacing:1.0px;">node-2</div>
<div class="t" style="left:2627.1px;top:1035.3px;font-size:26px;line-height:34px;color:#565656;letter-spacing:0.8px;">3m</div>
<div style="position:absolute;left:712px;top:1172px;width:2080px;height:2px;background:#dddddd"></div>
<div class="t" style="left:735.2px;top:1193.3px;font-size:26px;line-height:34px;color:#0079b8;letter-spacing:1.4px;">my-blog-</div>
<div class="t" style="left:735.2px;top:1221.3px;font-size:26px;line-height:34px;color:#0079b8;letter-spacing:1.4px;">mariadb-0</div>
<div class="chip" style="left:990.0px;top:1196.0px;width:184.0px;border-color:#005d99;color:#005d99">app:mariadb</div>
<div class="chip" style="left:1188.0px;top:1196.0px;width:271.6px;border-color:#005d99;color:#005d99">chart:mariadb-6.13.0</div>
<div class="chip" style="left:990.0px;top:1252.0px;width:256.0px;border-color:#005d99;color:#005d99">component:master</div>
<div class="chip" style="left:1259.0px;top:1252.0px;width:224.0px;border-color:#005d99;color:#005d99">release:my-blog</div>
<div class="t" style="left:1762.5px;top:1193.3px;font-size:26px;line-height:34px;color:#565656;letter-spacing:-2px;">1/1</div>
<div class="t" style="left:1954.5px;top:1193.3px;font-size:26px;line-height:34px;color:#565656;letter-spacing:0.4px;">Running</div>
<div class="t" style="left:2148.5px;top:1193.3px;font-size:26px;line-height:34px;color:#565656;letter-spacing:1.2px;">0</div>
<div class="t" style="left:2340.5px;top:1193.3px;font-size:26px;line-height:34px;color:#0079b8;letter-spacing:1.0px;">example-cluster-</div>
<div class="t" style="left:2340.5px;top:1221.3px;font-size:26px;line-height:34px;color:#0079b8;letter-spacing:1.0px;">node-1</div>
<div class="t" style="left:2627.1px;top:1193.3px;font-size:26px;line-height:34px;color:#565656;letter-spacing:0.8px;">3m</div>
<div style="position:absolute;left:712px;top:1330px;width:2080px;height:2px;background:#dddddd"></div>
<div style="position:absolute;left:712px;top:1332px;width:2080px;height:72px;background:#fafafa;border-top:2px solid #cccccc;border-radius:0 0 5px 5px"></div>
<div class="t" style="left:2274.0px;top:1356.4px;font-size:22px;line-height:29px;color:#565656;letter-spacing:0.8px;">Items per page</div>
<div class="t" style="left:2476.5px;top:1356.4px;font-size:22px;line-height:29px;color:#000000;letter-spacing:-1.5px;">10</div>
<svg class="i" style="left:2536.5px;top:1361.5px" width="19" height="12" viewBox="0 0 19 12"><path d="M2 2 L9.5 10 L17 2" stroke="#999999" stroke-width="2" fill="none" stroke-linecap="round" stroke-linejoin="round"/></svg>
<div style="position:absolute;left:2458px;top:1393.5px;width:110px;height:2px;background:#8c8c8c"></div>
<div class="t" style="left:2615.0px;top:1356.4px;font-size:22px;line-height:29px;color:#565656;letter-spacing:0.2px;">1 - 2 of 2 items</div>
<div class="card" style="top:1482px;height:454px"></div>
<div class="t" style="left:709.0px;top:1508.1px;font-size:36px;line-height:47px;color:#000000;letter-spacing:0.3px;">ReplicaSets</div>
<div class="tbl" style="top:1604px;height:306px"></div>
<div style="position:absolute;left:712px;top:1606px;width:2080px;height:72px;background:#fafafa;border-radius:5px 5px 0 0"></div>
<div style="position:absolute;left:712px;top:1678px;width:2080px;height:2px;background:#d5d5d5"></div>
<div class="t" style="left:736.2px;top:1628.4px;font-size:22px;line-height:29px;color:#565656;letter-spacing:0.9px;font-weight:bold;">Name</div>
<div class="t" style="left:1073.2px;top:1628.4px;font-size:22px;line-height:29px;color:#565656;letter-spacing:0.9px;font-weight:bold;">Labels</div>
<div class="t" style="left:1743.5px;top:1628.4px;font-size:22px;line-height:29px;color:#565656;letter-spacing:0.9px;font-weight:bold;">Status</div>
<div class="t" style="left:1935.5px;top:1628.4px;font-size:22px;line-height:29px;color:#565656;letter-spacing:0.9px;font-weight:bold;">Age</div>
<div class="t" style="left:2127.5px;top:1628.4px;font-size:22px;line-height:29px;color:#565656;letter-spacing:0.9px;font-weight:bold;">Containers</div>
<div class="t" style="left:2349.5px;top:1628.4px;font-size:22px;line-height:29px;color:#565656;letter-spacing:0.9px;font-weight:bold;">Selector</div>
<div style="position:absolute;left:1047px;top:1618px;width:2px;height:51px;background:#dddddd"></div>
<div style="position:absolute;left:1717.5px;top:1618px;width:2px;height:51px;background:#dddddd"></div>
<div style="position:absolute;left:1910px;top:1618px;width:2px;height:51px;background:#dddddd"></div>
<div style="position:absolute;left:2101.6px;top:1618px;width:2px;height:51px;background:#dddddd"></div>
<div style="position:absolute;left:2323.7px;top:1618px;width:2px;height:51px;background:#dddddd"></div>
<div class="t" style="left:735.2px;top:1699.3px;font-size:26px;line-height:34px;color:#0079b8;letter-spacing:1.4px;">my-blog-ghost-</div>
<div class="t" style="left:735.2px;top:1727.3px;font-size:26px;line-height:34px;color:#0079b8;letter-spacing:1.4px;">77df85c6cd</div>
<div class="chip" style="left:1074.7px;top:1702.0px;width:258.3px;border-color:#005d99;color:#005d99">app:my-blog-ghost</div>
<div class="chip" style="left:1346.6px;top:1702.0px;width:234.8px;border-color:#005d99;color:#005d99">chart:ghost-8.0.5</div>
<div class="chip" style="left:1074.7px;top:1758.0px;width:223.1px;border-color:#005d99;color:#005d99">release:my-blog</div>
<div class="t" style="left:1742.5px;top:1699.3px;font-size:26px;line-height:34px;color:#565656;letter-spacing:-2px;">1/1</div>
<div class="t" style="left:1934.5px;top:1699.3px;font-size:26px;line-height:34px;color:#565656;letter-spacing:0.8px;">3m</div>
<div class="t" style="left:2126.5px;top:1699.3px;font-size:26px;line-height:34px;color:#565656;letter-spacing:1.4px;">my-blog-</div>
<div class="t" style="left:2126.5px;top:1727.3px;font-size:26px;line-height:34px;color:#565656;letter-spacing:1.4px;">ghost</div>
<div class="chip" style="left:2350.0px;top:1702.0px;width:259.5px;border-color:#00847a;color:#00847a">app:my-blog-ghost</div>
<div class="chip" style="left:2350.0px;top:1758.0px;width:224.0px;border-color:#00847a;color:#00847a">release:my-blog</div>
<div style="position:absolute;left:712px;top:1836px;width:2080px;height:2px;background:#dddddd"></div>
<div style="position:absolute;left:712px;top:1838px;width:2080px;height:72px;background:#fafafa;border-top:2px solid #cccccc;border-radius:0 0 5px 5px"></div>
<div class="t" style="left:2284.0px;top:1862.4px;font-size:22px;line-height:29px;color:#565656;letter-spacing:0.8px;">Items per page</div>
<div class="t" style="left:2486.5px;top:1862.4px;font-size:22px;line-height:29px;color:#000000;letter-spacing:-1.5px;">10</div>
<svg class="i" style="left:2546.5px;top:1867.5px" width="19" height="12" viewBox="0 0 19 12"><path d="M2 2 L9.5 10 L17 2" stroke="#999999" stroke-width="2" fill="none" stroke-linecap="round" stroke-linejoin="round"/></svg>
<div style="position:absolute;left:2468px;top:1899.5px;width:110px;height:2px;background:#8c8c8c"></div>
<div class="t" style="left:2625.0px;top:1862.4px;font-size:22px;line-height:29px;color:#565656;letter-spacing:-0.4px;">1 - 1 of 1 items</div>
<div class="card" style="top:1988px;height:300px"></div>
<div style="position:absolute;left:2113px;top:124px;width:714px;height:203px;background:#fff;border:2px solid #cccccc;border-radius:6px;box-shadow:0 2px 4px rgba(0,0,0,0.12)"></div>
<div class="t" style="left:2137.0px;top:152.8px;font-size:24px;line-height:31px;color:#313131;letter-spacing:0.1px;font-weight:bold;">Contexts</div>
<div style="position:absolute;left:2115px;top:186px;width:714px;height:59px;background:#d8e3e9"></div>
<div class="t" style="left:2161.0px;top:197.5px;font-size:28px;line-height:36px;color:#000000;letter-spacing:0.7px;">example-cluster-ka3TuTzYo4a@example-clu...</div>
<div class="t" style="left:2161.0px;top:258.5px;font-size:28px;line-height:36px;color:#565656;letter-spacing:1.0px;">kubernetes-admin@kubernetes</div>
</body></html>
